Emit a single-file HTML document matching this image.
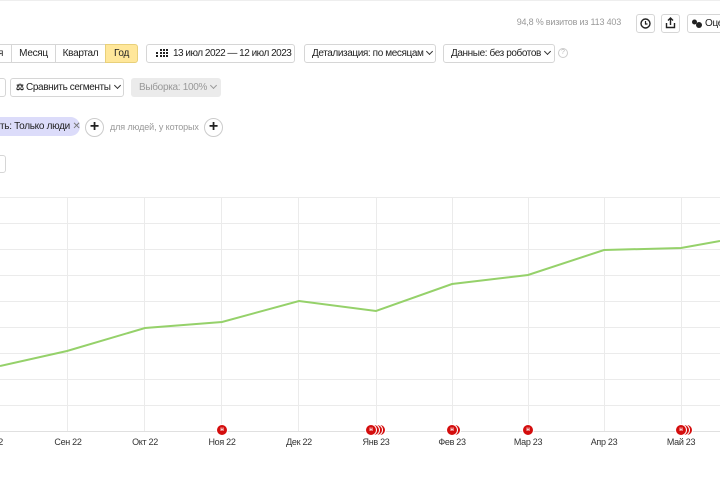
<!DOCTYPE html>
<html><head><meta charset="utf-8"><style>
body{margin:0;width:720px;height:480px;overflow:hidden;background:#fff;font-family:"Liberation Sans",Arial,sans-serif;font-size:10px;color:#222;position:relative}
.a{position:absolute;box-sizing:border-box}
.b{position:absolute;box-sizing:border-box;border:1px solid #d6d6d6;border-radius:3px;background:#fff;height:19px;line-height:17px;font-size:10px;letter-spacing:-0.3px;padding:0 7px;white-space:nowrap;overflow:hidden}
.chev{display:inline-block;width:4px;height:4px;border-right:1.2px solid #333;border-bottom:1.2px solid #333;transform:rotate(45deg);margin-left:4px;position:relative;top:-2px}
.plus{position:absolute;width:19px;height:19px;border:1px solid #ccc;border-radius:50%;box-sizing:border-box;text-align:center;line-height:16px;font-size:16px;font-weight:bold;color:#222}
.lbl{position:absolute;top:437px;font-size:9px;letter-spacing:-0.3px;color:#333;width:60px;text-align:center}
.m{position:absolute;top:424px;width:12px;height:12px;border-radius:50%;background:#d40d0d;color:#fff;font-size:6px;text-align:center;line-height:10px;font-weight:bold;border:1px solid #fff;box-sizing:border-box}
</style></head><body>
<div class="a" style="left:0;top:0;width:720px;height:1px;background:#eee"></div>
<div class="a" style="right:99px;top:17px;font-size:9px;color:#999;letter-spacing:-0.2px">94,8 % визитов из 113 403</div>
<div class="b" style="left:636px;top:14px;width:19px;padding:0">
<svg width="17" height="17" style="position:absolute;left:0;top:0"><circle cx="8.5" cy="8.5" r="4.5" fill="none" stroke="#222" stroke-width="1.4"/><path d="M8.5 6v3h2" fill="none" stroke="#222" stroke-width="1.2"/></svg></div>
<div class="b" style="left:661px;top:14px;width:19px;padding:0">
<svg width="17" height="17" style="position:absolute;left:0;top:0"><path d="M8.5 3v7M6 5.5l2.5-2.5 2.5 2.5M4.5 8v4.5h8V8" fill="none" stroke="#222" stroke-width="1.4"/></svg></div>
<div class="b" style="left:687px;top:14px;width:40px;padding-left:17px"><svg width="12" height="12" style="position:absolute;left:3px;top:3px"><circle cx="3.5" cy="4" r="2.5" fill="#222"/><circle cx="8" cy="7" r="3" fill="#222"/></svg>Оценка</div>

<div class="b" style="left:-10px;top:44px;width:22px;border-radius:0">я</div>
<div class="b" style="left:11px;top:44px;width:45px;border-radius:0;text-align:center;padding:0">Месяц</div>
<div class="b" style="left:55px;top:44px;width:51px;border-radius:0;text-align:center;padding:0">Квартал</div>
<div class="b" style="left:105px;top:44px;width:33px;background:#ffe79a;border-color:#e8d07a;border-radius:0 3px 3px 0;text-align:center;padding:0">Год</div>
<div class="b" style="left:146px;top:44px;width:149px;padding-left:26px;letter-spacing:-0.5px"><svg width="12" height="9" style="position:absolute;left:9px;top:4px"><g fill="#222"><rect x="4" y="0" width="2" height="2"/><rect x="7" y="0" width="2" height="2"/><rect x="10" y="0" width="2" height="2"/><rect x="0" y="3" width="2" height="2"/><rect x="4" y="3" width="2" height="2"/><rect x="7" y="3" width="2" height="2"/><rect x="10" y="3" width="2" height="2"/><rect x="0" y="6" width="2" height="2"/><rect x="4" y="6" width="2" height="2"/><rect x="7" y="6" width="2" height="2"/><rect x="10" y="6" width="2" height="2"/></g></svg>13 июл 2022 — 12 июл 2023</div>
<div class="b" style="left:304px;top:44px;width:132px;padding-left:7px;letter-spacing:-0.4px">Детализация: по месяцам<span class="chev"></span></div>
<div class="b" style="left:443px;top:44px;width:112px;letter-spacing:-0.4px">Данные: без роботов<span class="chev"></span></div>
<div class="a" style="left:558px;top:48px;width:10px;height:10px;border:1px solid #ccc;border-radius:50%;font-size:7px;color:#bbb;text-align:center;line-height:8px">?</div>

<div class="b" style="left:-10px;top:78px;width:13px"></div>
<div class="b" style="left:10px;top:78px;width:114px;padding-left:5px;letter-spacing:-0.4px"><b style="font-size:9px">⚖</b> Сравнить сегменты<span class="chev"></span></div>
<div class="b" style="left:131px;top:78px;width:90px;background:#ebebeb;border-color:#ebebeb;color:#999">Выборка: 100%<span class="chev" style="border-color:#999"></span></div>

<div class="a" style="left:-20px;top:117px;width:100px;height:19px;border-radius:10px;background:#dcdcfa;padding-left:20px;line-height:19px;font-size:10px;letter-spacing:-0.3px;white-space:nowrap">ть: Только люди <span style="color:#777">✕</span></div>
<div class="plus" style="left:85px;top:118px">+</div>
<div class="a" style="left:110px;top:122px;font-size:9px;color:#999;letter-spacing:-0.1px">для людей, у которых</div>
<div class="plus" style="left:204px;top:118px">+</div>
<div class="b" style="left:-10px;top:155px;width:13px;height:18px"></div>

<svg class="a" style="left:0;top:0" width="720" height="480">
<g stroke="#ebebeb" stroke-width="1">
<path d="M0 197.5H720M0 223.5H720M0 249.5H720M0 275.5H720M0 301.5H720M0 327.5H720M0 353.5H720M0 379.5H720M0 405.5H720"/>
<path d="M67.5 197V431M144.5 197V431M221.5 197V431M298.5 197V431M376.5 197V431M452.5 197V431M528.5 197V431M604.5 197V431M681.5 197V431"/>
</g>
<path d="M0 431.5H720" stroke="#e0e0e0"/>
<polyline points="0,366 67,351 145,328 222,322 299,301 376,311 452,284 528,275 604,250 681,248 720,241" fill="none" stroke="#95d16a" stroke-width="2"/>
</svg>
<div class="m" style="left:216px">н</div>
<div class="m" style="left:374px"></div><div class="m" style="left:371px"></div><div class="m" style="left:368px"></div><div class="m" style="left:365px">н</div>
<div class="m" style="left:449px"></div><div class="m" style="left:446px">н</div>
<div class="m" style="left:522px">н</div>
<div class="m" style="left:681px"></div><div class="m" style="left:678px"></div><div class="m" style="left:675px">н</div>

<div class="lbl" style="left:-30px;text-align:right;width:33px">2</div>
<div class="lbl" style="left:38px">Сен 22</div>
<div class="lbl" style="left:115px">Окт 22</div>
<div class="lbl" style="left:192px">Ноя 22</div>
<div class="lbl" style="left:269px">Дек 22</div>
<div class="lbl" style="left:346px">Янв 23</div>
<div class="lbl" style="left:422px">Фев 23</div>
<div class="lbl" style="left:498px">Мар 23</div>
<div class="lbl" style="left:574px">Апр 23</div>
<div class="lbl" style="left:651px">Май 23</div>
</body></html>
